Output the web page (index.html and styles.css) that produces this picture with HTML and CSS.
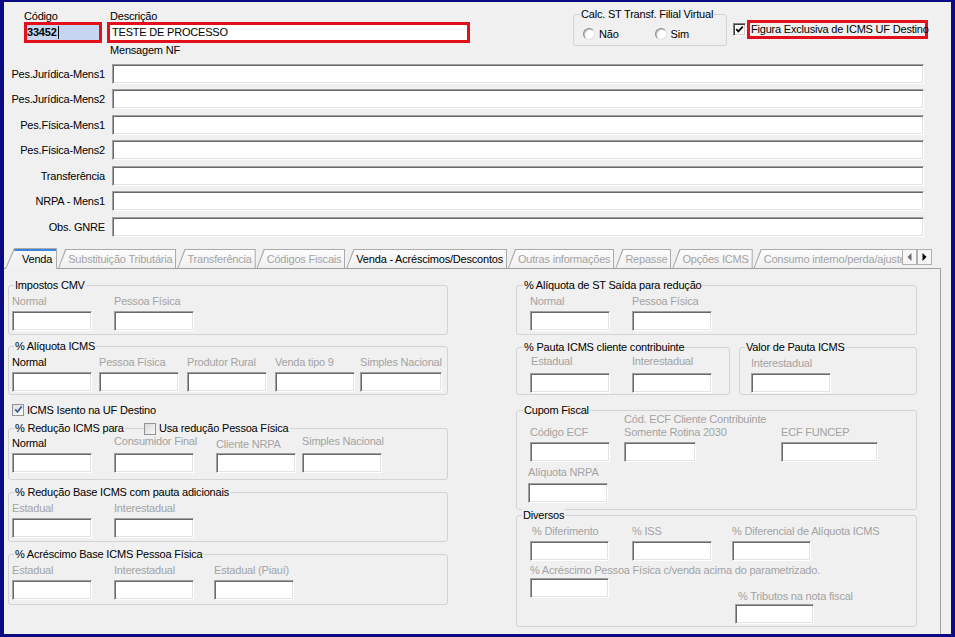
FILE: index.html
```html
<!DOCTYPE html>
<html lang="pt-BR">
<head>
<meta charset="utf-8">
<title>Figura Tributária</title>
<link rel="stylesheet" href="styles.css">
</head>
<body>
<div class="frame">
  <div class="header">
    <div class="hleft">
      <div class="code-field">
        <div class="hlabel">Código</div>
        <div class="code-box"><span class="sel">33452</span><span class="caret"></span></div>
      </div>
      <div class="desc-field">
        <div class="hlabel">Descrição</div>
        <div class="desc-box">TESTE DE PROCESSO</div>
      </div>
    </div>
    <div class="grp calc">
      <div class="grp-title">Calc. ST Transf. Filial Virtual</div>
      <div class="radios">
        <span class="radio"><span class="rb"></span>Não</span>
        <span class="radio"><span class="rb"></span>Sim</span>
      </div>
    </div>
    <div class="figura">
      <span class="cbc"><svg width="9" height="9" viewBox="0 0 9 9"><polyline points="1.2,4.2 3.3,6.4 7.8,1.6" fill="none" stroke="#000" stroke-width="1.7"/></svg></span>
      <span class="figura-box">Figura Exclusiva de ICMS UF Destino</span>
    </div>
  </div>

  <div class="msg-label">Mensagem NF</div>
  <div class="frows">
    <div class="frow"><div class="flabel">Pes.Jurídica-Mens1</div><div class="inp wide"></div></div>
    <div class="frow"><div class="flabel">Pes.Jurídica-Mens2</div><div class="inp wide"></div></div>
    <div class="frow"><div class="flabel">Pes.Física-Mens1</div><div class="inp wide"></div></div>
    <div class="frow"><div class="flabel">Pes.Física-Mens2</div><div class="inp wide"></div></div>
    <div class="frow"><div class="flabel">Transferência</div><div class="inp wide"></div></div>
    <div class="frow"><div class="flabel">NRPA - Mens1</div><div class="inp wide"></div></div>
    <div class="frow"><div class="flabel">Obs. GNRE</div><div class="inp wide"></div></div>
  </div>

  <div class="tabbar">
    <div class="tabs">
      <div class="tab on">Venda</div>
      <div class="tab">Substituição Tributária</div>
      <div class="tab">Transferência</div>
      <div class="tab">Códigos Fiscais</div>
      <div class="tab en">Venda - Acréscimos/Descontos</div>
      <div class="tab">Outras informações</div>
      <div class="tab">Repasse</div>
      <div class="tab">Opções ICMS</div>
      <div class="tab">Consumo interno/perda/ajuste</div>
    </div>
    <div class="arrows">
      <span class="arr"><svg width="5" height="8" viewBox="0 0 5 8"><polygon points="4.5,0 4.5,8 0.5,4" fill="#6a6a6a"/></svg></span>
      <span class="arr"><svg width="5" height="8" viewBox="0 0 5 8"><polygon points="0.5,0 0.5,8 4.5,4" fill="#000"/></svg></span>
    </div>
  </div>

  <div class="panel">
    <div class="col-left">
      <div class="grp g-a">
        <div class="grp-title">Impostos CMV</div>
        <div class="fr c-cmv">
          <div class="fd"><div class="lb">Normal</div><div class="inp"></div></div>
          <div class="fd"><div class="lb">Pessoa Física</div><div class="inp"></div></div>
        </div>
      </div>

      <div class="grp g-b">
        <div class="grp-title">% Alíquota ICMS</div>
        <div class="fr c-aliq">
          <div class="fd"><div class="lb k">Normal</div><div class="inp"></div></div>
          <div class="fd"><div class="lb">Pessoa Física</div><div class="inp"></div></div>
          <div class="fd"><div class="lb">Produtor Rural</div><div class="inp"></div></div>
          <div class="fd"><div class="lb">Venda tipo 9</div><div class="inp"></div></div>
          <div class="fd"><div class="lb">Simples Nacional</div><div class="inp w82"></div></div>
        </div>
      </div>

      <div class="chkrow">
        <span class="cbx"><svg width="9" height="9" viewBox="0 0 9 9"><polyline points="1.2,4.4 3.4,6.8 7.8,1.4" fill="none" stroke="#46609a" stroke-width="1.8"/></svg></span>
        <span>ICMS Isento na UF Destino</span>
      </div>

      <div class="grp g-c">
        <div class="grp-title tflex">
          <span class="t-red"><span class="bgc">% Redução ICMS para</span></span>
          <span class="cbx off"></span>
          <span class="bgc t-usa">Usa redução Pessoa Física</span>
        </div>
        <div class="fr c-red">
          <div class="fd"><div class="lb k">Normal</div><div class="inp"></div></div>
          <div class="fd"><div class="lb hi">Consumidor Final</div><div class="inp"></div></div>
          <div class="fd"><div class="lb lo">Cliente NRPA</div><div class="inp"></div></div>
          <div class="fd"><div class="lb hi">Simples Nacional</div><div class="inp"></div></div>
        </div>
      </div>

      <div class="grp g-d">
        <div class="grp-title">% Redução Base ICMS com pauta adicionais</div>
        <div class="fr c-cmv">
          <div class="fd"><div class="lb">Estadual</div><div class="inp"></div></div>
          <div class="fd"><div class="lb">Interestadual</div><div class="inp"></div></div>
        </div>
      </div>

      <div class="grp g-e">
        <div class="grp-title">% Acréscimo Base ICMS Pessoa Física</div>
        <div class="fr c-acr">
          <div class="fd"><div class="lb">Estadual</div><div class="inp"></div></div>
          <div class="fd"><div class="lb">Interestadual</div><div class="inp"></div></div>
          <div class="fd"><div class="lb">Estadual (Piauí)</div><div class="inp"></div></div>
        </div>
      </div>
    </div>

    <div class="col-right">
      <div class="grp r-a">
        <div class="grp-title">% Alíquota de ST Saída para redução</div>
        <div class="fr c-cmv">
          <div class="fd"><div class="lb">Normal</div><div class="inp"></div></div>
          <div class="fd"><div class="lb">Pessoa Física</div><div class="inp"></div></div>
        </div>
      </div>

      <div class="pair">
        <div class="grp r-pauta">
          <div class="grp-title">% Pauta ICMS cliente contribuinte</div>
          <div class="fr c-cmv">
            <div class="fd"><div class="lb pl1">Estadual</div><div class="inp"></div></div>
            <div class="fd"><div class="lb">Interestadual</div><div class="inp"></div></div>
          </div>
        </div>
        <div class="grp r-valor">
          <div class="grp-title">Valor de Pauta ICMS</div>
          <div class="fr">
            <div class="fd"><div class="lb">Interestadual</div><div class="inp"></div></div>
          </div>
        </div>
      </div>

      <div class="grp r-cupom">
        <div class="grp-title">Cupom Fiscal</div>
        <div class="fr c-cupom">
          <div class="fd"><div class="lb tall">Código ECF</div><div class="inp"></div></div>
          <div class="fd"><div class="lb two">Cód. ECF Cliente Contribuinte<br>Somente Rotina 2030</div><div class="inp w72"></div></div>
          <div class="fd"><div class="lb tall">ECF FUNCEP</div><div class="inp w97"></div></div>
        </div>
        <div class="fd nrpa"><div class="lb">Alíquota NRPA</div><div class="inp"></div></div>
      </div>

      <div class="grp r-div">
        <div class="grp-title">Diversos</div>
        <div class="fr c-div">
          <div class="fd"><div class="lb pl2">% Diferimento</div><div class="inp w79"></div></div>
          <div class="fd"><div class="lb">% ISS</div><div class="inp"></div></div>
          <div class="fd"><div class="lb">% Diferencial de Alíquota ICMS</div><div class="inp w79"></div></div>
        </div>
        <div class="lb acr">% Acréscimo Pessoa Física c/venda acima do parametrizado.</div>
        <div class="div-bottom">
          <div class="inp w79 acr-inp"></div>
          <div class="fd trib"><div class="lb pl3">% Tributos na nota fiscal</div><div class="inp w79"></div></div>
        </div>
      </div>
    </div>
  </div>
</div>
</body>
</html>
```

FILE: styles.css
```css
* { box-sizing: border-box; }
html, body { margin: 0; padding: 0; }
body {
  background: #f0f0f0;
  font-family: "Liberation Sans", Arial, sans-serif;
  font-size: 11px;
  letter-spacing: -0.2px;
  color: #000;
}

.frame {
  width: 955px;
  height: 637px;
  border-style: solid;
  border-color: #0a0a82;
  border-width: 2px 4px 3px 4px;
  background: #f0f0f0;
  display: flex;
  flex-direction: column;
  overflow: hidden;
}

/* ---------- header ---------- */
.header {
  display: flex;
  align-items: flex-start;
  height: 41px;
  padding: 8px 0 0 20px;
}
.hleft { display: flex; }
.hlabel { height: 12px; line-height: 12px; white-space: nowrap; }
.code-field { width: 78px; }
.desc-field { width: 363px; margin-left: 5px; }
.desc-field .hlabel { padding-left: 3px; }
.code-box {
  height: 21px;
  border: 3px solid #e3101c;
  background: #c6d6f0;
  display: flex;
  align-items: center;
  font-weight: bold;
  line-height: 15px;
}
.caret { width: 1px; height: 13px; background: #000; margin-left: 1px; }
.desc-box {
  height: 21px;
  border: 3px solid #e3101c;
  background: #fff;
  padding-left: 2px;
  line-height: 15px;
  white-space: nowrap;
}

.calc {
  width: 154px;
  margin: 4px 0 0 103px;
  padding: 0 0 5px 9px;
}
.calc .grp-title { margin-left: -3px; }
.radios { display: flex; align-items: center; margin-top: 6px; height: 13px; }
.radio { display: flex; align-items: center; width: 72px; }
.rb {
  width: 12px;
  height: 12px;
  border-radius: 50%;
  background: #fff;
  border: 1px solid;
  border-color: #8a8a8a #e2e2e2 #e2e2e2 #8a8a8a;
  box-shadow: inset 1px 1px 0 #bcbcbc;
  margin-right: 4px;
}

.figura { display: flex; align-items: center; margin: 10px 0 0 6px; }
.cbc {
  width: 13px;
  height: 13px;
  background: #fff;
  border: 1px solid;
  border-color: #808080 #fff #fff #808080;
  box-shadow: inset 1px 1px 0 #404040, inset -1px -1px 0 #d4d0c8;
  display: flex;
  align-items: center;
  justify-content: center;
  margin-right: 1px;
}
.figura-box {
  height: 19px;
  width: 181px;
  border: 3px solid #e3101c;
  padding-left: 1px;
  line-height: 13px;
  white-space: nowrap;
}

/* ---------- message rows ---------- */
.msg-label { margin-top: 1px; padding-left: 106px; height: 13px; line-height: 13px; }
.frows { margin-top: 7px; }
.frow { display: flex; align-items: center; height: 20px; }
.frow:nth-child(even) { margin-top: 5px; }
.frow:nth-child(odd):not(:first-child) { margin-top: 6px; }
.flabel { width: 101px; margin-right: 7px; text-align: right; white-space: nowrap; }

.inp {
  width: 80px;
  height: 20px;
  background: #fff;
  border: 1px solid;
  border-color: #a0a0a0 #fff #fff #a0a0a0;
  box-shadow: inset 1px 1px 0 #696969, inset -1px -1px 0 #e3e3e3;
}
.inp.wide { width: 812px; }
.inp.w82 { width: 82px; }
.inp.w79 { width: 79px; }
.inp.w72 { width: 72px; }
.inp.w97 { width: 97px; }

/* ---------- tabs ---------- */
.tabbar {
  display: flex;
  align-items: flex-end;
  height: 21px;
  margin-top: 11px;
  padding-left: 1px;
  position: relative;
  z-index: 1;
}
.tabs {
  display: flex;
  align-items: flex-end;
  width: 897px;
  height: 21px;
  overflow: hidden;
}
.tab {
  position: relative;
  isolation: isolate;
  flex: none;
  height: 19px;
  margin: 0 1px 1px 0;
  padding: 1px 4px 0 10px;
  line-height: 18px;
  white-space: nowrap;
  color: #a3a3a3;
}
.tab::before {
  content: "";
  position: absolute;
  inset: 0;
  background: #aaaaaa;
  clip-path: polygon(0 100%, 7px 0, 100% 0, 100% 100%);
  z-index: -1;
}
.tab::after {
  content: "";
  position: absolute;
  inset: 1px 1px 0 1px;
  background: linear-gradient(#fcfcfc, #f0f0f0);
  clip-path: polygon(0 100%, 7px 0, 100% 0, 100% 100%);
  z-index: -1;
}
.tab.on {
  height: 21px;
  margin-bottom: 0;
  padding: 2px 5px 0 17px;
  color: #000;
}
.tab.on::before { clip-path: polygon(0 100%, 9px 0, 100% 0, 100% 100%); }
.tab.on::after {
  background: linear-gradient(#3f86da 0, #3f86da 2px, #f8f8f8 2px, #f0f0f0);
  clip-path: polygon(0 100%, 9px 0, 100% 0, 100% 100%);
}
.tab.en { color: #000; }

.arrows { display: flex; margin-bottom: 4px; }
.arr {
  width: 15px;
  height: 16px;
  border: 1px solid #b0b0b0;
  background: #f6f6f6;
  display: flex;
  align-items: center;
  justify-content: center;
}

/* ---------- panel ---------- */
.panel {
  flex: 1;
  display: flex;
  align-items: flex-start;
  width: 937px;
  margin-top: -1px;
  padding-left: 4px;
  border-top: 1px solid #a0a0a0;
  border-right: 1px solid #a0a0a0;
}
.col-left { width: 440px; margin-top: 16px; }
.col-right { width: 401px; margin-left: 68px; margin-top: 16px; }

.grp { border: 1px solid #d3d3d3; border-radius: 3px; }
.grp-title {
  width: max-content;
  height: 13px;
  line-height: 13px;
  margin: -7px 0 0 2px;
  padding: 0 1px;
  background: #f0f0f0;
  white-space: nowrap;
}
.grp-title.tflex {
  display: flex;
  align-items: center;
  padding: 0;
  background: transparent;
}
.bgc { background: #f0f0f0; padding: 0 1px; }
.t-red { width: 130px; }
.t-usa { padding-left: 3px; }

.fr { display: grid; grid-auto-flow: column; justify-content: start; margin-top: 3px; }
.c-cmv { grid-template-columns: 102px 80px; }
.c-aliq { grid-template-columns: 87px 88px 88px 85px 82px; }
.c-red { grid-template-columns: 102px 102px 86px 80px; margin-top: 2px; }
.c-acr { grid-template-columns: 102px 100px 80px; }
.c-cupom { grid-template-columns: 94px 157px 97px; margin-top: 0; }
.c-div { grid-template-columns: 102px 100px 80px; }

.fd { display: flex; flex-direction: column; }
.fd .inp { margin-top: 3px; }
.lb { height: 13px; line-height: 13px; white-space: nowrap; color: #a3a3a3; }
.lb.k { color: #000; }
.lb.hi { line-height: 9px; }
.lb.lo { line-height: 15px; }
.lb.pl1 { padding-left: 1px; }
.lb.pl2 { padding-left: 2px; }
.lb.pl3 { padding-left: 3px; }
.lb.tall { height: 26px; padding-top: 13px; }
.lb.two { height: 26px; }

/* left groups */
.g-a { padding: 0 0 3px 3px; }
.g-b { padding: 0 0 2px 3px; margin-top: 11px; }
.chkrow {
  display: flex;
  align-items: center;
  height: 13px;
  margin-top: 8px;
  padding-left: 4px;
}
.cbx {
  width: 12px;
  height: 12px;
  border: 1px solid #8f949a;
  background: linear-gradient(135deg, #dedede, #ffffff);
  display: flex;
  align-items: center;
  justify-content: center;
  margin-right: 3px;
}
.cbx.off { background: linear-gradient(135deg, #d6d6d6, #fbfbfb); margin-right: 0; }
.g-c { padding: 0 0 6px 3px; margin-top: 12px; }
.g-d { padding: 0 0 3px 3px; margin-top: 12px; }
.g-e { padding: 0 0 4px 3px; margin-top: 12px; }

/* right groups */
.col-right .grp-title { margin-left: -7px; }
.r-a { padding: 0 0 3px 13px; }
.pair { display: flex; margin-top: 12px; }
.r-pauta { width: 214px; padding: 0 0 1px 13px; }
.r-pauta .fr { margin-top: 1px; }
.r-pauta .fd .inp { margin-top: 5px; }
.r-valor { width: 178px; margin-left: 9px; padding: 0 0 1px 11px; }
.col-right .r-valor .grp-title { margin-left: -6px; }
.r-cupom { margin-top: 15px; padding: 0 0 6px 13px; }
.col-right .r-cupom .grp-title { margin-bottom: -4px; }
.nrpa { margin: 4px 0 0 -2px; }
.nrpa .inp { margin-top: 4px; }
.r-div { margin-top: 5px; padding: 0 0 2px 13px; }
.col-right .r-div .grp-title { margin-left: -8px; }
.lb.acr { margin-top: 3px; }
.div-bottom { display: flex; align-items: flex-start; }
.acr-inp { margin-top: 1px; }
.trib { margin: 13px 0 0 126px; }
.trib .inp { margin-top: 1px; }
```
